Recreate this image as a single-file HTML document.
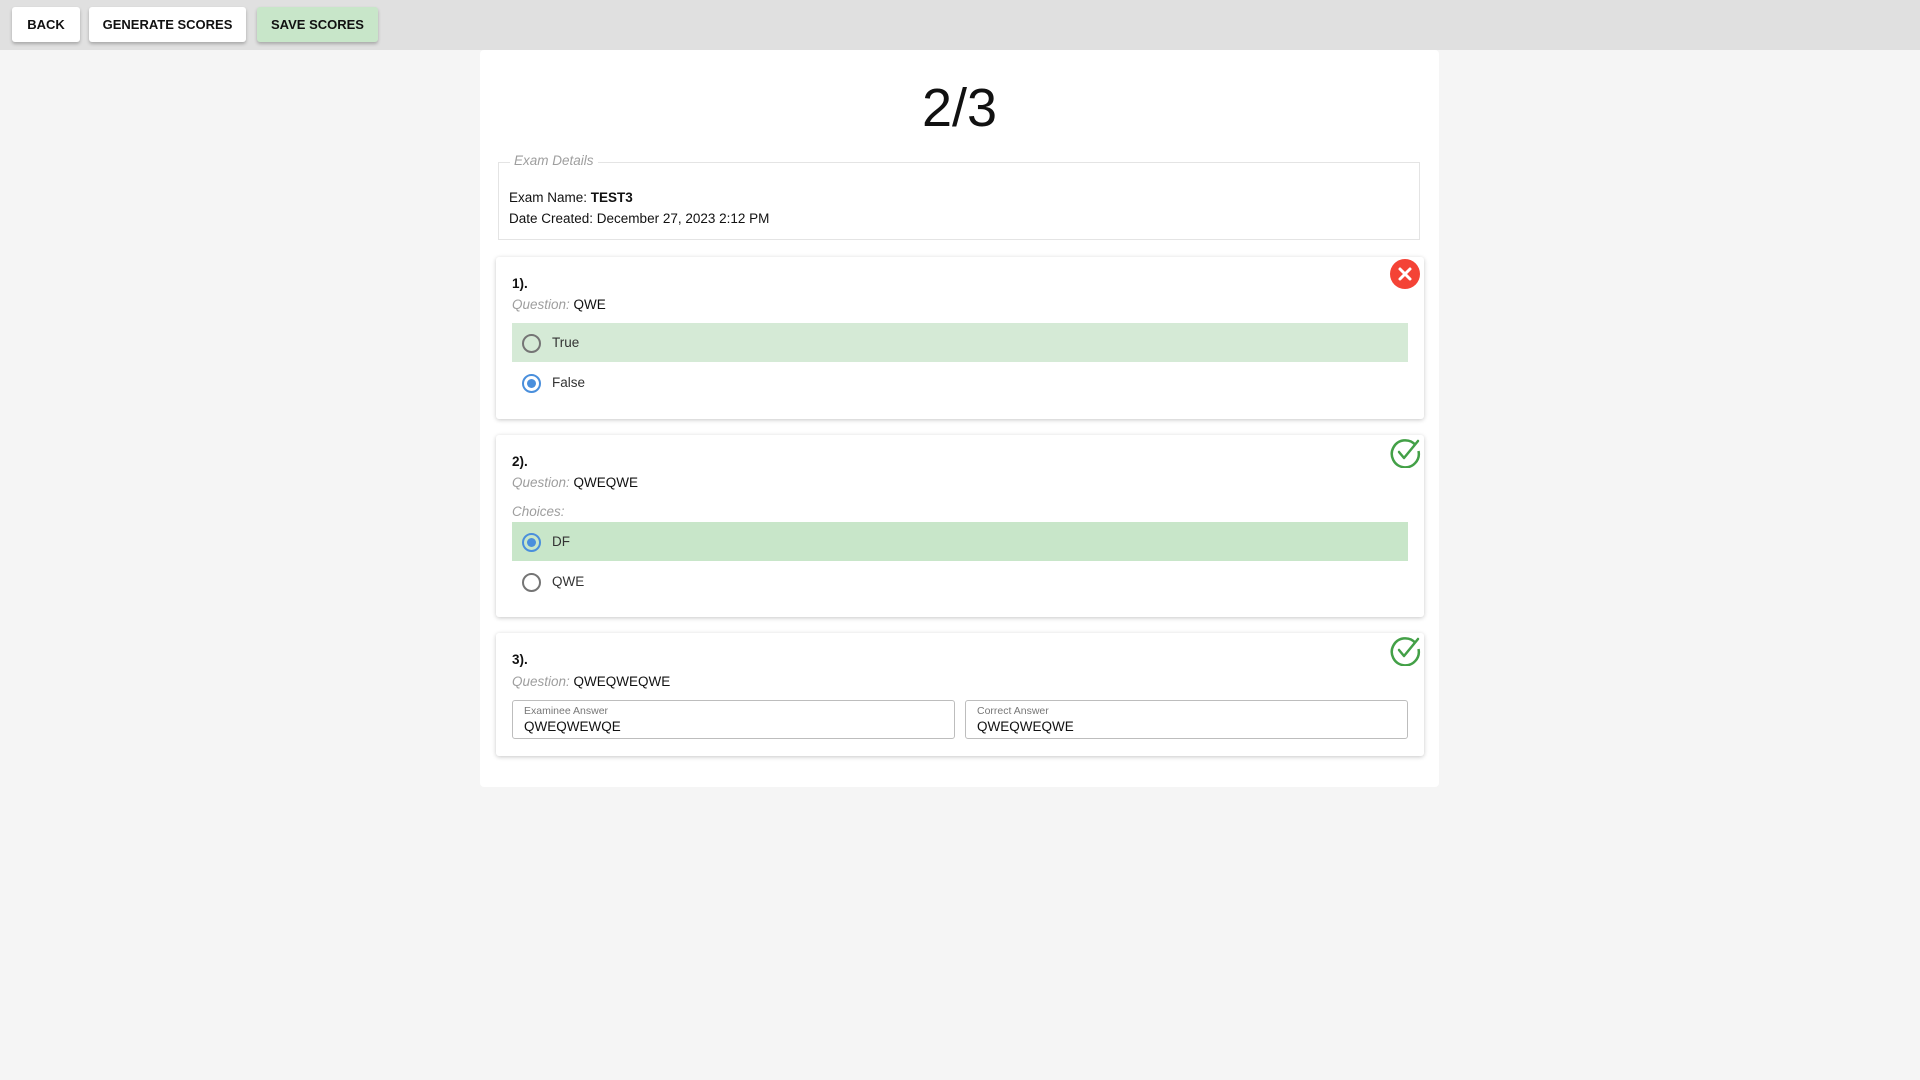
<!DOCTYPE html>
<html><head><style>
*{box-sizing:border-box;margin:0;padding:0}
body{width:1920px;height:1080px;background:#f5f5f5;font-family:"Liberation Sans",sans-serif;color:#111;position:relative;overflow:hidden}
.top{position:absolute;left:0;top:0;width:1920px;height:50px;background:#e0e0e0}
.btn{position:absolute;top:7px;height:35px;background:#fff;border-radius:3px;box-shadow:0 2px 3px rgba(0,0,0,.25);font-size:13px;font-weight:bold;display:flex;align-items:center;justify-content:center;color:#111}
.panel{position:absolute;left:480px;top:50px;width:959px;height:737px;background:#fff;border-radius:4px}
.score{position:absolute;left:0;width:100%;top:23px;text-align:center;font-size:54px;line-height:70px}
.fs{position:absolute;left:498px;top:162px;width:922px;height:78px;border:1px solid #e4e4e4}
.legend{position:absolute;left:510px;top:153px;background:#fff;padding:0 4px;font-style:italic;color:#9e9e9e;font-size:13.5px}
.t{position:absolute;font-size:13.5px;white-space:nowrap}
.card{position:absolute;left:496px;width:928px;background:#fff;border-radius:3px;box-shadow:0 1px 4px rgba(0,0,0,.22)}
.q{color:#9e9e9e;font-style:italic}
.row{position:absolute;left:512px;width:896px;height:39px}
.radio{position:absolute;left:10px;top:11px;width:19px;height:19px;border-radius:50%;border:2px solid #757575}
.radio.on{border-color:#4a8fdc}
.radio.on:after{content:"";position:absolute;left:3px;top:3px;width:9px;height:9px;border-radius:50%;background:#4a8fdc}
.row span{position:absolute;left:40px;top:12px;font-size:13.5px;color:#333}
.inp{position:absolute;top:700px;height:39px;width:443px;border:1px solid #bdbdbd;border-radius:3px}
.inp .l{position:absolute;left:11px;top:4px;font-size:10.5px;color:#777}
.inp .v{position:absolute;left:11px;top:18px;font-size:13.5px}
svg{position:absolute}
</style></head><body>
<div class="top"></div>
<div class="btn" style="left:12px;width:68px">BACK</div>
<div class="btn" style="left:89px;width:157px">GENERATE SCORES</div>
<div class="btn" style="left:257px;width:121px;background:#c8e6c9">SAVE SCORES</div>
<div class="panel"><div class="score">2/3</div></div>
<div class="fs"></div>
<div class="legend">Exam Details</div>
<div class="t" style="left:509px;top:190px">Exam Name: <b>TEST3</b></div>
<div class="t" style="left:509px;top:211px">Date Created: December 27, 2023 2:12 PM</div>

<div class="card" style="top:257px;height:162px"></div>
<div class="t" style="left:512px;top:276px"><b>1).</b></div>
<div class="t" style="left:512px;top:297px"><span class="q">Question:</span> QWE</div>
<div class="row" style="top:323px;background:#d5ead6"><div class="radio"></div><span>True</span></div>
<div class="row" style="top:363px"><div class="radio on"></div><span>False</span></div>
<svg style="left:1390px;top:259px" width="30" height="30" viewBox="0 0 30 30"><circle cx="15" cy="15" r="15" fill="#f44336"/><path d="M10 10L20 20M20 10L10 20" stroke="#fff" stroke-width="3" stroke-linecap="round"/></svg>

<div class="card" style="top:435px;height:182px"></div>
<div class="t" style="left:512px;top:454px"><b>2).</b></div>
<div class="t" style="left:512px;top:475px"><span class="q">Question:</span> QWEQWE</div>
<div class="t q" style="left:512px;top:504px">Choices:</div>
<div class="row" style="top:522px;background:#c8e6c9"><div class="radio on"></div><span>DF</span></div>
<div class="row" style="top:562px"><div class="radio"></div><span>QWE</span></div>
<svg style="left:1390px;top:437px" width="31" height="31" viewBox="0 0 31 31"><path d="M25.5 8A13.5 13.5 0 1 0 28.5 14" fill="none" stroke="#43a047" stroke-width="2.5"/><path d="M9 15l5 6L28 4" fill="none" stroke="#43a047" stroke-width="2.5" stroke-linecap="round" stroke-linejoin="round"/></svg>

<div class="card" style="top:633px;height:123px"></div>
<div class="t" style="left:512px;top:652px"><b>3).</b></div>
<div class="t" style="left:512px;top:674px"><span class="q">Question:</span> QWEQWEQWE</div>
<div class="inp" style="left:512px"><div class="l">Examinee Answer</div><div class="v">QWEQWEWQE</div></div>
<div class="inp" style="left:965px"><div class="l">Correct Answer</div><div class="v">QWEQWEQWE</div></div>
<svg style="left:1390px;top:635px" width="31" height="31" viewBox="0 0 31 31"><path d="M25.5 8A13.5 13.5 0 1 0 28.5 14" fill="none" stroke="#43a047" stroke-width="2.5"/><path d="M9 15l5 6L28 4" fill="none" stroke="#43a047" stroke-width="2.5" stroke-linecap="round" stroke-linejoin="round"/></svg>
</body></html>
